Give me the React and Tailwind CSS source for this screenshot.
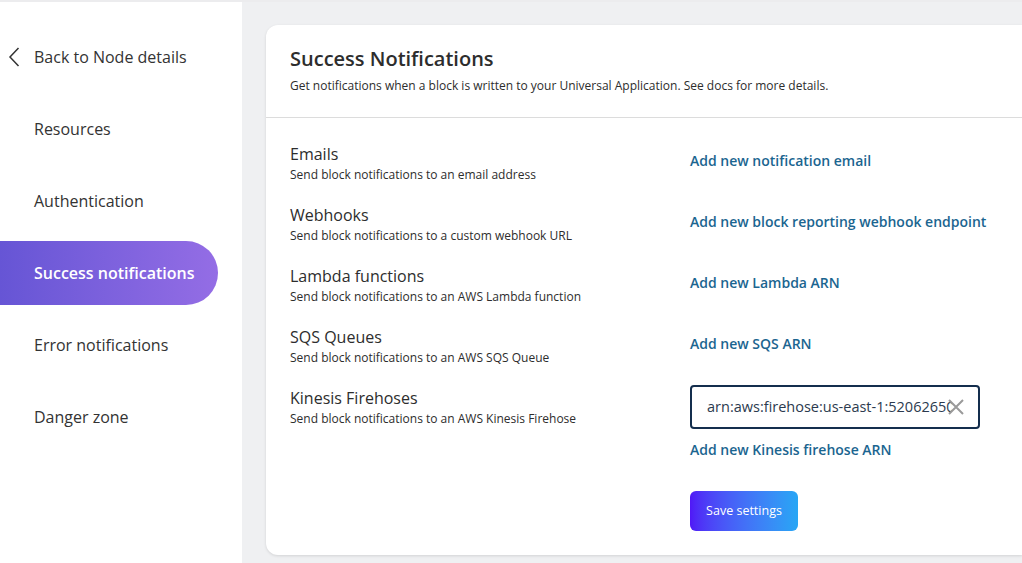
import React from "react";

const navItems = [
  "Resources",
  "Authentication",
  "Success notifications",
  "Error notifications",
  "Danger zone",
];

const rows = [
  { title: "Emails", desc: "Send block notifications to an email address", link: "Add new notification email" },
  { title: "Webhooks", desc: "Send block notifications to a custom webhook URL", link: "Add new block reporting webhook endpoint" },
  { title: "Lambda functions", desc: "Send block notifications to an AWS Lambda function", link: "Add new Lambda ARN" },
  { title: "SQS Queues", desc: "Send block notifications to an AWS SQS Queue", link: "Add new SQS ARN" },
];

export default function App() {
  return (
    <div
      className="flex h-[563px] w-[1022px] overflow-hidden bg-[#eff0f2] border-t-2 border-[#ececee]"
      style={{ fontFamily: '"Open Sans", "Noto Sans", sans-serif' }}
    >
      <aside className="w-[242px] shrink-0 bg-white flex flex-col pt-[19px]">
        <div className="flex items-center h-[72px] text-[16px] text-[#333]">
          <svg width="12" height="20" viewBox="0 0 12 20" className="ml-[8px] mr-[14px]">
            <path d="M10.5 1 L2 10 L10.5 19" fill="none" stroke="#333" strokeWidth="1.5" />
          </svg>
          <span>Back to Node details</span>
        </div>
        {navItems.map((item) => {
          const active = item === "Success notifications";
          return (
            <div
              key={item}
              className={
                active
                  ? "flex items-center h-[64px] my-[4px] w-[218px] pl-[34px] rounded-r-full text-[16px] font-semibold text-white bg-gradient-to-r from-[#6655d5] to-[#946de5]"
                  : "flex items-center h-[72px] pl-[34px] text-[16px] text-[#333]"
              }
            >
              {item}
            </div>
          );
        })}
      </aside>
      <main className="flex-1 pt-[23px] pl-[24px]">
        <div className="bg-white rounded-l-[12px] h-[530px] shadow-[0_1px_3px_rgba(0,0,0,0.12)]">
          <div className="px-[24px] pt-[20px] h-[93px] border-b border-[#dcdcdc]">
            <h1 className="text-[20px] font-semibold text-[#2d2d2d] leading-[28px]">Success Notifications</h1>
            <p className="text-[12px] text-[#2d2d2d] mt-[5px] leading-[16px]">
              Get notifications when a block is written to your Universal Application. See docs for more details.
            </p>
          </div>
          <div className="px-[24px] pt-[25px]">
            {rows.map((r) => (
              <div key={r.title} className="flex h-[61px]">
                <div className="w-[400px]">
                  <div className="text-[16px] font-medium text-[#2d2d2d] leading-[22px]">{r.title}</div>
                  <div className="text-[12px] text-[#2d2d2d] leading-[16px] mt-[2px]">{r.desc}</div>
                </div>
                <div className="pt-[8px] text-[14px] font-semibold text-[#1b6590] leading-[20px]">{r.link}</div>
              </div>
            ))}
            <div className="flex">
              <div className="w-[400px]">
                <div className="text-[16px] font-medium text-[#2d2d2d] leading-[22px]">Kinesis Firehoses</div>
                <div className="text-[12px] text-[#2d2d2d] leading-[16px] mt-[2px]">Send block notifications to an AWS Kinesis Firehose</div>
              </div>
              <div className="flex flex-col -mt-[2px]">
                <div className="relative w-[290px] h-[44px] border-2 border-[#142e4d] rounded-[4px] flex items-center overflow-hidden">
                  <span className="pl-[15px] text-[14.5px] text-[#2b3a4e] whitespace-nowrap overflow-hidden w-[260px]">
                    arn:aws:firehose:us-east-1:520626504
                  </span>
                  <svg width="18" height="18" viewBox="0 0 18 18" className="absolute right-[13px] top-[11px]">
                    <path d="M2 2 L16 16 M16 2 L2 16" stroke="#9a9a9a" strokeWidth="2" />
                  </svg>
                </div>
                <div className="mt-[11px] text-[14px] font-semibold text-[#1b6590] leading-[20px]">Add new Kinesis firehose ARN</div>
                <button className="mt-[31px] w-[108px] h-[40px] rounded-[6px] text-[12.5px] text-white bg-gradient-to-r from-[#5017f6] to-[#27a6f5]">
                  Save settings
                </button>
              </div>
            </div>
          </div>
        </div>
      </main>
    </div>
  );
}
